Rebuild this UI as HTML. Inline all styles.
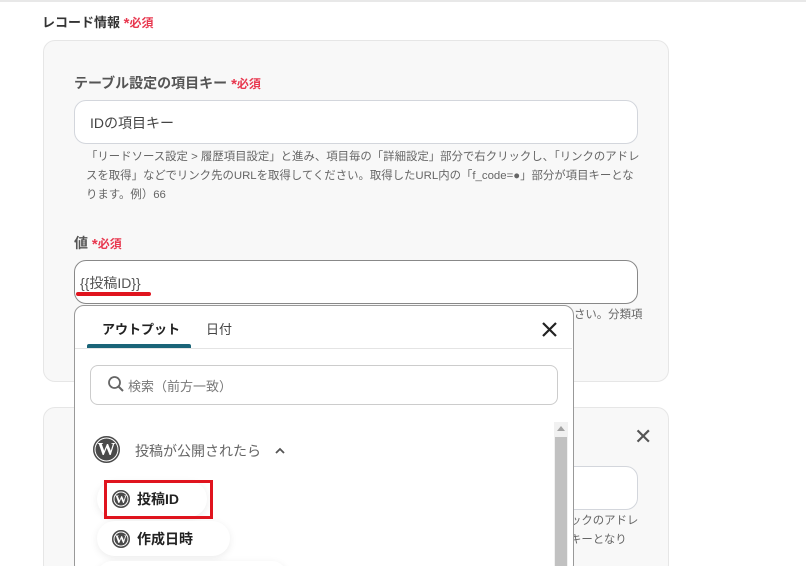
<!DOCTYPE html>
<html style="width:806px;height:566px;overflow:hidden"><head><meta charset="utf-8"><style>
*{box-sizing:border-box;margin:0;padding:0}
body{width:806px;height:566px;overflow:hidden;background:#fff;font-family:"Liberation Sans","Noto Sans CJK JP",sans-serif;position:relative;color:#333}
.abs{position:absolute}
.req{color:#e8384f;font-size:12px;font-weight:bold}
.req b{font-size:15px;vertical-align:-1px}
.card{position:absolute;left:43px;width:626px;background:#f8f8f8;border:1px solid #e6e6e6;border-radius:12px}
.lbl{position:absolute;font-size:14px;font-weight:bold;color:#555}
.inp{position:absolute;background:#fff;border:1px solid #d3d6dc;border-radius:12px}
.help{position:absolute;font-size:11.4px;color:#666;line-height:19px}
.wp{position:absolute;border-radius:50%;background:#4a4a4a;color:#fff;font-family:"Liberation Serif",serif;font-weight:bold;text-align:center;box-shadow:inset 0 0 0 1.5px #4a4a4a,inset 0 0 0 2.5px #fff}
.pill{position:absolute;background:#fff;border-radius:18px;box-shadow:0 2px 8px rgba(0,0,0,.08)}
</style></head><body>
<div class="abs" style="left:0;top:0;width:806px;height:2px;background:#e8e8e8"></div>
<div class="abs" style="left:42px;top:12px;font-size:13px;font-weight:bold;color:#333">レコード情報 <span class="req"><b>*</b>必須</span></div>

<div class="card" style="top:40px;height:342px"></div>
<div class="lbl" style="left:74px;top:73px">テーブル設定の項目キー <span class="req"><b>*</b>必須</span></div>
<div class="inp" style="left:74px;top:100px;width:564px;height:44px"></div>
<div class="abs" style="left:90px;top:113px;font-size:14px;color:#444">IDの項目キー</div>
<div class="help" style="left:86px;top:148px;width:557px">「リードソース設定 &gt; 履歴項目設定」と進み、項目毎の「詳細設定」部分で右クリックし、「リンクのアドレスを取得」などでリンク先のURLを取得してください。取得したURL内の「f_code=●」部分が項目キーとなります。例）66</div>
<div class="lbl" style="left:74px;top:233px">値 <span class="req"><b>*</b>必須</span></div>
<div class="inp" style="left:74px;top:260px;width:564px;height:44px;border-color:#888"></div>
<div class="abs" style="left:80px;top:273px;font-size:14px;color:#555">{{投稿ID}}</div>
<div class="abs" style="left:76px;top:292px;width:75px;height:4px;background:#e0141e;border-radius:2px"></div>
<div class="help" style="left:574px;top:306px">さい。分類項</div>

<div class="card" style="top:407px;height:170px"></div>
<div class="abs" style="left:634px;top:424px;font-size:22px;color:#555">✕</div>
<div class="inp" style="left:540px;top:466px;width:98px;height:44px"></div>
<div class="help" style="left:570px;top:512px">ックのアドレ<br>キーとなり</div>

<div class="abs" style="left:74px;top:305px;width:500px;height:270px;background:#fff;border:1px solid #999;border-radius:10px"></div>
<div class="abs" style="left:102px;top:319px;font-size:13px;font-weight:bold;color:#222">アウトプット</div>
<div class="abs" style="left:206px;top:319px;font-size:13px;color:#444">日付</div>
<div class="abs" style="left:87px;top:344px;width:104px;height:4px;background:#1a6478;border-radius:2px 2px 0 0"></div>
<div class="abs" style="left:75px;top:348px;width:497px;height:1px;background:#e4e4e4"></div>
<svg class="abs" style="left:541px;top:321px" width="17" height="17"><path d="M2 2L15 15M15 2L2 15" stroke="#222" stroke-width="2.2"/></svg>
<div class="abs" style="left:90px;top:365px;width:468px;height:40px;border:1px solid #ccc;border-radius:8px"></div>
<svg class="abs" style="left:107px;top:375px" width="18" height="18"><circle cx="7.5" cy="7.5" r="5.5" fill="none" stroke="#666" stroke-width="1.8"/><path d="M11.5 11.5L16 16" stroke="#666" stroke-width="2"/></svg>
<div class="abs" style="left:128px;top:376px;font-size:13px;color:#777">検索（前方一致）</div>
<div class="abs" style="left:554px;top:422px;width:14px;height:150px;background:#f1f1f1"></div>
<div class="abs" style="left:555px;top:437px;width:12px;height:130px;background:#c1c1c1"></div>
<div class="abs" style="left:557px;top:426px;width:0;height:0;border-left:4px solid transparent;border-right:4px solid transparent;border-bottom:5px solid #a3a3a3"></div>

<div class="wp" style="left:93px;top:436px;width:27px;height:27px;font-size:18px;line-height:27px">W</div>
<div class="abs" style="left:135px;top:441px;font-size:14px;color:#666">投稿が公開されたら</div>
<svg class="abs" style="left:274px;top:446px" width="12" height="10"><path d="M2 7L6 3L10 7" stroke="#555" stroke-width="1.8" fill="none"/></svg>

<div class="pill" style="left:97px;top:481px;width:110px;height:36px"></div>
<div class="abs" style="left:104px;top:480px;width:109px;height:39px;border:3.5px solid #e0141e"></div>
<div class="wp" style="left:112px;top:490px;width:18px;height:18px;font-size:12px;line-height:18px">W</div>
<div class="abs" style="left:137px;top:489px;font-size:14px;font-weight:bold;color:#222">投稿ID</div>
<div class="pill" style="left:97px;top:521px;width:133px;height:35px"></div>
<div class="wp" style="left:112px;top:530px;width:18px;height:18px;font-size:12px;line-height:18px">W</div>
<div class="abs" style="left:137px;top:529px;font-size:14px;font-weight:bold;color:#222">作成日時</div>
<div class="pill" style="left:97px;top:561px;width:190px;height:30px"></div>
</body></html>
